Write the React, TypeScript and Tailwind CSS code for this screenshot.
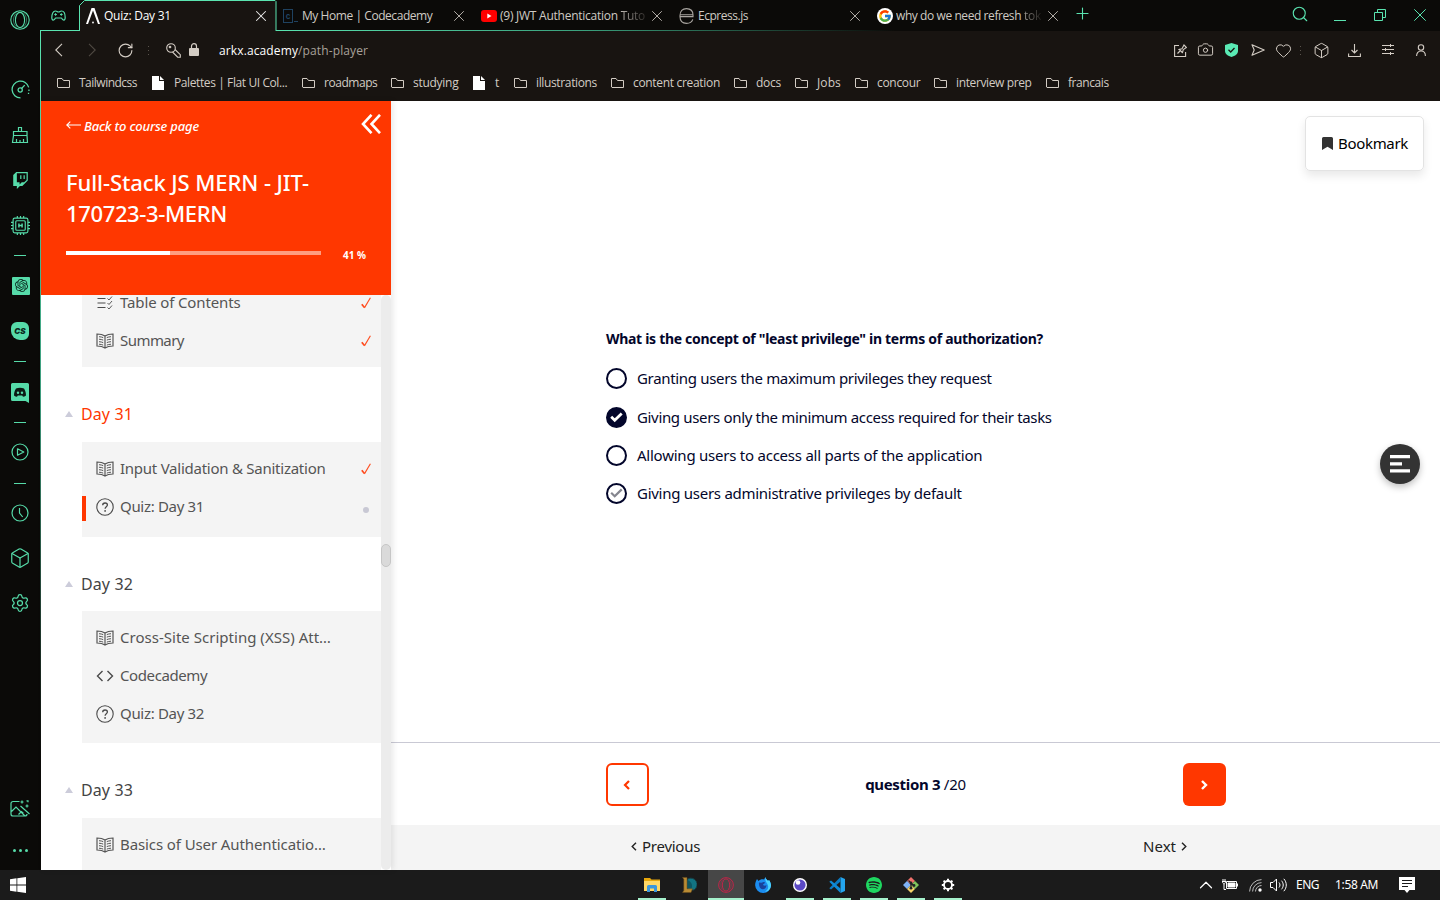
import type { ReactNode } from "react";
import { X, Plus, Search, ChevronUp, RotateCw, Camera, Heart, Box, Settings } from "lucide-react";
import { SiOpenai, SiTwitch, SiSpotify } from "react-icons/si";
import { FcGoogle } from "react-icons/fc";

type IconProps = { className?: string };

/* ---------- small drawings ---------- */

const OperaIcon = ({ className = "" }: IconProps) => (
  <svg viewBox="0 0 20 20" fill="none" stroke="currentColor" strokeWidth="1.1" className={className}>
    <circle cx="10" cy="10" r="9.2" />
    <ellipse cx="10" cy="10" rx="4.6" ry="7.6" />
    <path d="M13 2.500c2.500 2 3.500 4.500 3.500 7.500s-1 5.500-3.500 7.500" strokeWidth="0.5" />
    <path d="M7 2.500c-2.500 2-3.500 4.500-3.500 7.500s1 5.500 3.500 7.500" strokeWidth="0.5" />
  </svg>
);

const GamepadIcon = () => (
  <svg viewBox="0 0 15 11" fill="none" stroke="currentColor" strokeWidth="1.200" className="h-[11px] w-[15px]">
    <path d="M4.500 1C6 1 6 2 7.500 2S9 1 10.500 1C13 1 14.200 4 14.200 7.500c0 3.500-2.400 3.300-3.700.5H4.500C3.200 10.800.8 11 .8 7.500.8 4 2 1 4.500 1z" strokeLinejoin="round" />
    <path d="M4.600 3.200v2.600M3.300 4.500h2.600M9 4.500h2.600M10.300 3.200v2.600" strokeWidth="1" />
  </svg>
);

const GaugeIcon = () => (
  <svg viewBox="0 0 18 18" fill="none" stroke="currentColor" strokeWidth="1.2" className="size-[19px]">
    <path d="M9 17A8 8 0 1 1 16.800 7" />
    <path d="M17 9v1.500M16.600 12v1.300" />
    <circle cx="8.700" cy="9.500" r="2" />
    <path d="M10 8l3-3.200" />
  </svg>
);

const BroomIcon = () => (
  <svg viewBox="0 0 18 18" fill="none" stroke="currentColor" strokeWidth="1.2" className="size-[18px]">
    <path d="M7.500 5.500v-4h3v4M2.500 9.500v-4h13.500v4zM2.500 9.500l-1 7h15l-.5-7M5.500 16v-3M9 16v-2M12.500 16v-3" />
  </svg>
);

const ChipIcon = () => (
  <svg viewBox="0 0 18 18" fill="none" stroke="currentColor" strokeWidth="1.100" className="ml-px size-[19px]">
    <rect x="2" y="2" width="14" height="14" rx="1.500" />
    <rect x="4.500" y="4.500" width="9" height="9" rx="1" />
    <path d="M7.500 7v4M10.500 7v4M7.500 9h3" strokeWidth="1.400" />
    <path d="M6 0v2M9 0v2M12 0v2M6 16v2M9 16v2M12 16v2M0 6h2M0 9h2M0 12h2M16 6h2M16 9h2M16 12h2" />
  </svg>
);

const PlayIcon = () => (
  <svg viewBox="0 0 18 18" fill="none" stroke="currentColor" strokeWidth="1.200" className="size-[18px]">
    <circle cx="9" cy="9" r="8" />
    <path d="M6.500 5.800v6.400L12.800 9z" strokeLinejoin="round" />
  </svg>
);

const PictureIcon = () => (
  <svg viewBox="0 0 20 18" fill="none" stroke="currentColor" strokeWidth="1.200" className="h-[18px] w-5">
    <path d="M9.500 1.500H3a2 2 0 0 0-2 2v10.500a2 2 0 0 0 2 2h12a2 2 0 0 0 2-2M1.500 11.500l4.500-4.500 9 9M8.500 14.500l3-3 2 2" />
    <path d="M10.500 6l9 8M12 .5v3M10.500 2h3M17 4.500v3M15.500 6h3M16.500.8h1.500v1.500" />
  </svg>
);

const FolderIcon = () => (
  <svg viewBox="0 0 13 12" fill="none" stroke="#d3ccc4" className="h-3 w-[13px]">
    <path d="M.5 10V1.500h4.500l1.500 2h6V10.500H1z" strokeLinejoin="round" />
  </svg>
);

const FileIcon = () => (
  <svg viewBox="0 0 12 14" className="h-[14px] w-3">
    <path d="M0 0h7v5h5v9H0z" fill="#fff" />
    <path d="M8 0l4 4H8z" fill="#fff" />
  </svg>
);

const BookIcon = () => (
  <svg viewBox="0 0 18 16" fill="none" stroke="#555" className="h-4 w-[18px]">
    <path d="M9 3C7 1.600 4.500 1 1 1v12c3.500 0 6 .6 8 2 2-1.400 4.500-2 8-2V1c-3.500 0-6 .6-8 2zM9 3v12" strokeWidth="1.200" />
    <path d="M3 3.700c1.700.1 3 .4 4.200.9M3 6.200c1.700.1 3 .4 4.200.9M3 8.700c1.700.1 3 .4 4.200.9M3 11.200c1.700.1 3 .4 4.200.9M15 3.700c-1.700.1-3 .4-4.200.9M15 6.200c-1.700.1-3 .4-4.200.9M15 8.700c-1.700.1-3 .4-4.200.9M15 11.200c-1.700.1-3 .4-4.200.9" />
  </svg>
);

const QuizIcon = () => (
  <svg viewBox="0 0 18 18" fill="none" stroke="#4a4a4a" className="size-[18px]">
    <circle cx="9" cy="9" r="8.200" strokeWidth="1.100" />
    <path d="M6.700 7.200c0-3 4.700-2.800 4.700-.2 0 1.700-2.300 1.700-2.300 3.700" strokeWidth="1.300" />
    <circle cx="9.100" cy="12.900" r=".9" fill="#4a4a4a" stroke="none" />
  </svg>
);

const CodeIcon = () => (
  <svg viewBox="0 0 18 14" fill="none" stroke="#4a4a4a" strokeWidth="1.400" className="h-[14px] w-[18px]">
    <path d="M6.500 2L1.500 7l5 5M11.500 2l5 5-5 5" />
  </svg>
);

const ContentsIcon = () => (
  <svg viewBox="0 0 18 16" fill="none" stroke="#4a4a4a" strokeWidth="1.100" className="h-4 w-[18px]">
    <path d="M1.500 3.500h8M1.500 8h8M1.500 12.500h8" />
    <path d="M11.500 3.500l1.500 1.500 3-3.500M11.500 8l1.500 1.500 3-3.500M11.500 12.500l1.500 1.500 3-3.500" strokeWidth=".9" />
  </svg>
);

const TickIcon = () => (
  <svg viewBox="0 0 10 12" fill="none" stroke="#ff4a1c" className="h-3 w-[10px]">
    <path d="M.8 7.200L3.400 10.500" strokeWidth="1.700" />
    <path d="M3.400 10.900L9.400.8" strokeWidth="1.100" />
  </svg>
);

/* ---------- browser chrome ---------- */

const Cell = ({ h, children }: { h: string; children: ReactNode }) => (
  <div className={`flex shrink-0 items-center justify-center ${h}`}>{children}</div>
);

const Dash = () => <span className="h-px w-3 bg-current" />;

function OperaSidebar() {
  return (
    <aside className="flex w-10 shrink-0 flex-col bg-[#0b0a08] text-[#56dba9]">
      <Cell h="h-10"><OperaIcon className="size-5" /></Cell>
      <div className="h-[27px]" />
      <Cell h="h-[45px]"><GaugeIcon /></Cell>
      <Cell h="h-[46px]"><BroomIcon /></Cell>
      <Cell h="h-[45px]"><SiTwitch className="size-[17px]" /></Cell>
      <Cell h="h-[45px]"><ChipIcon /></Cell>
      <Cell h="h-[14px]"><Dash /></Cell>
      <Cell h="h-[47px]">
        <span className="ml-[2px] flex size-[18px] items-center justify-center rounded-[1px] bg-current">
          <SiOpenai className="size-[13px] text-[#0b2a20]" />
        </span>
      </Cell>
      <Cell h="h-[44px]">
        <span className="flex size-[18px] items-center justify-center rounded-md rounded-bl-[9px] bg-current">
          <span className="font-['Inter',sans-serif] text-[8px] leading-none font-black text-[#0b2a20] italic">CS</span>
        </span>
      </Cell>
      <Cell h="h-[16px]"><Dash /></Cell>
      <Cell h="h-[47px]">
        <svg viewBox="0 0 18 20" className="h-5 w-[18px]">
          <path d="M1.500 0h15A1.500 1.500 0 0 1 18 1.500V20l-3.500-2h-13A1.500 1.500 0 0 1 0 16.500v-15A1.500 1.500 0 0 1 1.500 0z" fill="#56dba9" />
          <path d="M5 5.500c2.500-1 5.500-1 8 0 1.500 2.500 2 4.500 2 7-1 .8-2 1.200-3 1.300l-.8-1.300h-4.400L6 13.800c-1-.1-2-.5-3-1.300 0-2.500.5-4.500 2-7z" fill="#0b1a14" />
          <circle cx="7" cy="9.800" r="1.200" fill="#56dba9" />
          <circle cx="11" cy="9.800" r="1.200" fill="#56dba9" />
        </svg>
      </Cell>
      <Cell h="h-[12px]"><Dash /></Cell>
      <Cell h="h-[48px]"><PlayIcon /></Cell>
      <Cell h="h-[14px]"><Dash /></Cell>
      <Cell h="h-[46px]">
        <svg viewBox="0 0 18 18" fill="none" stroke="currentColor" strokeWidth="1.200" className="size-[18px]">
          <circle cx="9" cy="9" r="8" />
          <path d="M8.500 4v5l3.200 4" />
        </svg>
      </Cell>
      <Cell h="h-[44px]"><Box className="size-[22px]" strokeWidth={1.300} /></Cell>
      <Cell h="h-[46px]"><Settings className="size-[20px]" strokeWidth={1.500} /></Cell>
      <div className="grow" />
      <Cell h="h-[43px]"><PictureIcon /></Cell>
      <Cell h="h-[40px]">
        <span className="flex gap-[3px]">
          <i className="size-[3px] rounded-full bg-current" />
          <i className="size-[3px] rounded-full bg-current" />
          <i className="size-[3px] rounded-full bg-current" />
        </span>
      </Cell>
    </aside>
  );
}

function Tab({ icon, title, tail, iconGap }: { icon: ReactNode; title: ReactNode; tail?: ReactNode; iconGap: string }) {
  return (
    <div className="flex w-[198px] items-center pr-[7px] pl-[6px]">
      <span className={`flex shrink-0 ${iconGap}`}>{icon}</span>
      <span className="mr-[3px] grow overflow-hidden whitespace-nowrap">{title}{tail}</span>
      <X className="size-[18px] shrink-0 text-[#b5b0aa]" strokeWidth={1.300} />
    </div>
  );
}

function TabStrip() {
  return (
    <div className="relative flex h-[31px] shrink-0 bg-[#0b0a08] text-[12px] text-[#cfcac4]">
      <div className="absolute bottom-0 left-0 h-px w-[39px] bg-[#5ae4b0]" />
      <div className="absolute bottom-0 left-[235px] h-px w-[620px] bg-linear-to-r from-[#5ae4b0] via-[#3a9f7c] to-transparent" />
      <div className="flex w-[38px] items-center pl-[10px] text-[#56dba9]">
        <GamepadIcon />
      </div>
      <div className="relative flex w-[198px] items-center pr-[7px] pl-[7px] text-white">
        <svg viewBox="0 0 198 31" className="absolute inset-0 h-[31px] w-[198px]">
          <path d="M.5 31V5.500l5-5h190.500l1 1V31" fill="#181411" stroke="#5ae4b0" />
        </svg>
        <svg viewBox="0 0 14 16" className="relative h-4 w-[14px] shrink-0">
          <path d="M0 16L5.500 0h3L14 16h-2L7 2.500 2 16z" fill="#fff" />
          <circle cx="7" cy="14.500" r=".9" fill="#fff" />
        </svg>
        <span className="relative ml-1 grow tracking-[-0.24px]">Quiz: Day 31</span>
        <X className="relative size-[18px] text-[#eee]" strokeWidth={1.400} />
      </div>
      <Tab
        iconGap="mr-1"
        icon={
          <span className="flex items-end gap-px text-[#1f4260]">
            <span className="flex h-[14px] w-[10px] items-center justify-center border border-current font-['Inter',sans-serif] text-[8px] font-bold">c</span>
            <i className="mb-px h-px w-1 bg-current" />
          </span>
        }
        title={<span className="tracking-[-0.44px]">My Home | Codecademy</span>}
      />
      <Tab
        iconGap="mr-[3px]"
        icon={
          <svg viewBox="0 0 16 12" className="h-3 w-4">
            <rect width="16" height="12" rx="3" fill="#f00" />
            <path d="M6.300 3.500v5L10.500 6z" fill="#fff" />
          </svg>
        }
        title={<span className="tracking-[-0.25px]">(9) JWT Authentication</span>}
        tail={<span className="bg-linear-to-r from-[#cfcac4] to-[#33302d] bg-clip-text tracking-[-0.3px] text-transparent"> Tuto</span>}
      />
      <Tab
        iconGap="mr-1"
        icon={
          <svg viewBox="0 0 15 16" fill="none" stroke="#a9a5a0" strokeWidth="1.100" className="h-4 w-[15px]">
            <path d="M1 8.600V7.500C1 3 3.500.6 7.500.6S14 3 14 7v1.600zM1 6.800h13M1 8.600c0 4.500 2.500 6.800 6.500 6.800 3.500 0 5.500-1.500 6.300-4" />
          </svg>
        }
        title={<span className="tracking-[-0.47px]">Ecpress.js</span>}
      />
      <Tab
        iconGap="mr-[3px]"
        icon={
          <span className="flex size-4 items-center justify-center rounded-full bg-white">
            <FcGoogle className="size-[14px]" />
          </span>
        }
        title={<span className="tracking-[-0.42px]">why do we need refresh</span>}
        tail={<span className="bg-linear-to-r from-[#b9b4ae] to-[#22201d] bg-clip-text tracking-[-0.2px] text-transparent"> tok</span>}
      />
      <div className="flex grow items-center text-[#5ae4b0]">
        <Plus className="mb-1 ml-1 size-[19px]" strokeWidth={1.400} />
        <div className="grow" />
        <Search className="mr-[25px] mb-[3px] size-[18px]" strokeWidth={1.500} />
        <span className="mt-[9px] mr-[28px] h-px w-3 bg-current" />
        <svg viewBox="0 0 12 12" fill="none" stroke="currentColor" className="mr-[28px] mb-px size-3">
          <path d="M.5 3.500h8v8h-8zM3.500 3.500v-3h8v8h-3" />
        </svg>
        <svg viewBox="0 0 12 12" fill="none" stroke="currentColor" className="mr-[14px] mb-px size-3">
          <path d="M.3.3l11.400 11.400M11.700.3L.3 11.700" />
        </svg>
      </div>
    </div>
  );
}

const Dots = () => (
  <svg viewBox="0 0 1 10" className="h-[10px] w-px">
    <path d="M0 0h1v1H0zM0 4h1v1H0zM0 8h1v1H0z" fill="#5a544d" />
  </svg>
);

function AddressBar() {
  return (
    <div className="flex h-[39px] shrink-0 items-center text-[#d3ccc4]">
      <svg viewBox="0 0 8 14" fill="none" stroke="currentColor" strokeWidth="1.100" className="mb-px ml-[14px] h-[14px] w-2">
        <path d="M7 .8L.8 7 7 13.200" />
      </svg>
      <svg viewBox="0 0 8 14" fill="none" stroke="#4f4943" strokeWidth="1.100" className="mb-px ml-[25px] h-[14px] w-2">
        <path d="M1 .8L7.200 7 1 13.200" />
      </svg>
      <RotateCw className="ml-[21px] size-[17px]" strokeWidth={1.600} />
      <span className="ml-[14px] flex"><Dots /></span>
      <svg viewBox="0 0 15 15" fill="none" stroke="currentColor" strokeWidth="1.100" className="mb-px ml-[17px] size-[15px]">
        <circle cx="5" cy="5" r="4.300" />
        <circle cx="4" cy="4" r=".8" />
        <path d="M9 6.500l5.300 5.200v2.500h-2.600L6.500 9" />
      </svg>
      <svg viewBox="0 0 10 13" className="mb-[2px] ml-[8px] h-[13px] w-[10px]">
        <rect y="5" width="10" height="8" rx="1" fill="#d3ccc4" />
        <path d="M2.500 5.500V3.200a2.500 2.500 0 0 1 5 0v2.300" fill="none" stroke="#d3ccc4" strokeWidth="1.200" />
      </svg>
      <span className="ml-[20px] text-[12px] tracking-[0.12px] text-[#a8a19a]">
        <span className="text-white">arkx.academy</span>/path-player
      </span>
      <div className="grow" />
      <svg viewBox="0 0 13 13" fill="none" stroke="currentColor" strokeWidth="1.100" className="mb-px size-[13px]">
        <path d="M5 1.500H.6v11h11V8M3.500 9.500l3-3M5 5l3 3.500M5 5.500l3-.8L10 1l2.500 2.500-3.200 2-.8 3z" />
      </svg>
      <Camera className="mb-[2px] ml-[10px] size-[17px]" strokeWidth={1.400} />
      <svg viewBox="0 0 13 14" className="mb-[2px] ml-[11px] h-[14px] w-[13px]">
        <path d="M6.500 0L13 2v6c0 3-3 5-6.500 6C3 13 0 11 0 8V2z" fill="#5aeab4" />
        <path d="M3.500 6.800l2.200 2.200 3.800-4" fill="none" stroke="#181411" strokeWidth="1.300" />
      </svg>
      <svg viewBox="0 0 14 12" fill="none" stroke="currentColor" strokeWidth="1.100" className="mb-px ml-[13px] h-3 w-[14px]">
        <path d="M1 .8L13.200 6 1 11.200 3.200 6z" strokeLinejoin="round" />
      </svg>
      <Heart className="mb-px ml-[10px] size-[17px]" strokeWidth={1.400} />
      <span className="ml-[8px] flex"><Dots /></span>
      <Box className="mb-px ml-[12px] size-[17px]" strokeWidth={1.400} />
      <svg viewBox="0 0 13 13" fill="none" stroke="currentColor" strokeWidth="1.100" className="mb-px ml-[18px] size-[13px]">
        <path d="M6.500 0v9M3.500 6l3 3 3-3M.6 9.500v3h11.800v-3" />
      </svg>
      <svg viewBox="0 0 12 11" fill="none" stroke="currentColor" className="mb-[2px] ml-[21px] h-[11px] w-3">
        <path d="M0 1.500h12M0 5.500h12M0 9.500h12M8.500 0v3M3.500 4v3M8.500 8v3" />
      </svg>
      <svg viewBox="0 0 10 12" fill="none" stroke="currentColor" strokeWidth="1.100" className="mb-[2px] mr-[14px] ml-[22px] h-3 w-[10px]">
        <circle cx="5" cy="3.500" r="2.700" />
        <path d="M.6 12c0-3 1.700-5 4.400-5s4.400 2 4.400 5" />
      </svg>
    </div>
  );
}

const bookmarks = [
  { label: "Tailwindcss", box: "w-[95px]", tracking: "tracking-[-0.5px]" },
  { label: "Palettes | Flat UI Col...", file: true, box: "w-[150px]", tracking: "tracking-[-0.4px]" },
  { label: "roadmaps", box: "w-[89px]", tracking: "tracking-[-0.45px]" },
  { label: "studying", box: "w-[82px]", tracking: "tracking-[-0.28px]" },
  { label: "t", file: true, box: "w-[41px]", tracking: "tracking-normal" },
  { label: "illustrations", box: "w-[97px]", tracking: "tracking-[-0.36px]" },
  { label: "content creation", box: "w-[123px]", tracking: "tracking-[-0.32px]" },
  { label: "docs", box: "w-[61px]", tracking: "tracking-[-0.26px]" },
  { label: "Jobs", box: "w-[60px]", tracking: "tracking-[0.1px]" },
  { label: "concour", box: "w-[79px]", tracking: "tracking-[-0.3px]" },
  { label: "interview prep", box: "w-[112px]", tracking: "tracking-[-0.38px]" },
  { label: "francais", box: "w-[80px]", tracking: "tracking-[-0.43px]" },
];

function BookmarkBar() {
  return (
    <div className="flex h-[31px] shrink-0 items-center pb-[5px] pl-4 text-[12px] text-[#d3ccc4]">
      {bookmarks.map((b) => (
        <div key={b.label} className={`flex shrink-0 items-center whitespace-nowrap ${b.box}`}>
          {b.file ? <FileIcon /> : <FolderIcon />}
          <span className={`${b.file ? "ml-[10px]" : "ml-[9px]"} ${b.tracking}`}>{b.label}</span>
        </div>
      ))}
    </div>
  );
}

/* ---------- course page ---------- */

type Item = { icon: ReactNode; label: string; tracking: string; done?: boolean; active?: boolean };

const firstItems: Item[] = [
  { icon: <ContentsIcon />, label: "Table of Contents", tracking: "tracking-[-0.13px]", done: true },
  { icon: <BookIcon />, label: "Summary", tracking: "tracking-[-0.55px]", done: true },
];
const day31: Item[] = [
  { icon: <BookIcon />, label: "Input Validation & Sanitization", tracking: "tracking-[-0.25px]", done: true },
  { icon: <QuizIcon />, label: "Quiz: Day 31", tracking: "tracking-[-0.32px]", active: true },
];
const day32: Item[] = [
  { icon: <BookIcon />, label: "Cross-Site Scripting (XSS) Att…", tracking: "tracking-[0.02px]" },
  { icon: <CodeIcon />, label: "Codecademy", tracking: "tracking-[-0.4px]" },
  { icon: <QuizIcon />, label: "Quiz: Day 32", tracking: "tracking-[-0.32px]" },
];
const day33: Item[] = [
  { icon: <BookIcon />, label: "Basics of User Authenticatio…", tracking: "tracking-[-0.1px]" },
];

function ItemList({ items, pad }: { items: Item[]; pad: string }) {
  return (
    <ul className={`ml-[41px] w-[299px] shrink-0 bg-[#f4f4f4] ${pad}`}>
      {items.map((it) => (
        <li key={it.label} className="flex h-[38px] items-center pr-[10px]">
          <span className={`h-[25px] w-1 ${it.active ? "mt-[3px] bg-[#ff3700]" : ""}`} />
          <span className="ml-[10px] flex w-[18px] justify-center">{it.icon}</span>
          <span className={`ml-[6px] grow pb-[2px] text-[15px] whitespace-nowrap text-[#555] ${it.tracking}`}>{it.label}</span>
          {it.done && <TickIcon />}
          {it.active && <span className="mt-[6px] mr-[2px] size-[6px] rounded-full bg-[#c8c8d4]" />}
        </li>
      ))}
    </ul>
  );
}

function DayLabel({ text, h, color }: { text: string; h: string; color: string }) {
  return (
    <div className={`flex shrink-0 items-center pt-[19px] pl-6 ${h}`}>
      <svg viewBox="0 0 8 6" className="h-[6px] w-2"><path d="M4 0l4 6H0z" fill="#ccccda" /></svg>
      <span className={`ml-2 text-[16px] tracking-[0.1px] ${color}`}>{text}</span>
    </div>
  );
}

function CourseSidebar() {
  return (
    <section className="relative z-10 flex w-[350px] shrink-0 flex-col bg-white shadow-[2px_0_6px_rgba(0,0,0,0.09)]">
      <header className="flex h-[194px] shrink-0 flex-col bg-[#ff3700] pl-[25px] text-white">
        <div className="flex h-[47px] items-center pt-[2px]">
          <svg viewBox="0 0 15 8" fill="none" stroke="#fff" strokeWidth="1.100" className="mb-px h-2 w-[15px]">
            <path d="M15 4H.8M4.300.6L.8 4l3.500 3.400" />
          </svg>
          <span className="ml-[3px] grow pt-[2px] text-[13px] font-medium tracking-[-0.18px] italic">Back to course page</span>
          <svg viewBox="0 0 20 20" fill="none" stroke="#fff" strokeWidth="2.600" className="mr-[10px] mb-[4px] size-5">
            <path d="M10.500 .8L2 10l8.500 9.200M19 .8L10.500 10l8.500 9.200" />
          </svg>
        </div>
        <h1 className="mt-[19px] text-[22px] leading-[31px] font-medium">
          <span className="block tracking-[-0.09px]">Full-Stack JS MERN - JIT-</span>
          <span className="block tracking-[-0.36px]">170723-3-MERN</span>
        </h1>
        <div className="mt-[15px] flex items-center">
          <div className="h-1 w-[255px] bg-[#ff9d80]">
            <div className="h-1 w-[104px] bg-white" />
          </div>
          <span className="ml-[22px] pt-[4px] text-[10px] leading-[14px] font-bold tracking-[-0.02px]">41 %</span>
        </div>
      </header>
      <div className="flex h-[575px] overflow-hidden">
        <div className="flex h-[575px] w-[340px] flex-col overflow-hidden">
          <div className="-mt-[11px] flex flex-col">
            <ItemList items={firstItems} pad="pb-[7px]" />
            <DayLabel text="Day 31" h="h-[75px]" color="text-[#ff3700]" />
            <ItemList items={day31} pad="pt-[8px] pb-[11px]" />
            <DayLabel text="Day 32" h="h-[74px]" color="text-[#444]" />
            <ItemList items={day32} pad="pt-[8px] pb-[10px]" />
            <DayLabel text="Day 33" h="h-[75px]" color="text-[#444]" />
            <ItemList items={day33} pad="pt-[8px] pb-[10px]" />
          </div>
        </div>
        <div className="w-[10px] rounded-[5px] bg-[#ececec] pt-[249px]">
          <div className="h-[23px] rounded-[5px] border border-[#c6c6c6] bg-[#dadada]" />
        </div>
      </div>
    </section>
  );
}

const options = [
  { text: "Granting users the maximum privileges they request", tracking: "tracking-[-0.33px]", state: "off", h: "h-[39px]" },
  { text: "Giving users only the minimum access required for their tasks", tracking: "tracking-[-0.338px]", state: "on", h: "h-[38px]" },
  { text: "Allowing users to access all parts of the application", tracking: "tracking-[-0.235px]", state: "off", h: "h-[38px]" },
  { text: "Giving users administrative privileges by default", tracking: "tracking-[-0.268px]", state: "hover", h: "h-[38px]" },
];

function Radio({ state }: { state: string }) {
  return (
    <svg viewBox="0 0 21 21" className="size-[21px] shrink-0">
      <circle cx="10.500" cy="10.500" r="9.500" fill={state === "on" ? "#03062b" : "#fff"} stroke="#03062b" strokeWidth="2" />
      {state !== "off" && (
        <path d="M5.200 9.800l3.500 3.400 7-6.800" fill="none" stroke={state === "on" ? "#fff" : "#85868f"} strokeWidth={state === "on" ? 2.800 : 2.200} />
      )}
    </svg>
  );
}

function Quiz() {
  return (
    <main className="flex grow flex-col bg-white text-[15px] text-[#03062b]">
      <div className="flex h-[642px] shrink-0 flex-col border-b border-[#c9c9d4]">
        <div className="flex justify-end pt-[15px] pr-4">
          <button className="flex h-[55px] w-[119px] items-center rounded-[5px] border border-[#e3e3e3] pl-4 text-black shadow-[0_5px_10px_rgba(0,0,0,0.09)]">
            <svg viewBox="0 0 11 13" className="h-[13px] w-[11px]">
              <path d="M1.500 0h8A1.500 1.500 0 0 1 11 1.500V13L5.500 9.800 0 13V1.500A1.500 1.500 0 0 1 1.500 0z" fill="#333" />
            </svg>
            <span className="ml-[5px] tracking-[-0.32px]">Bookmark</span>
          </button>
        </div>
        <div className="mt-[158px] ml-[215px]">
          <h2 className="h-[39px] text-[14px] leading-5 font-bold tracking-[-0.305px] whitespace-nowrap">
            What is the concept of "least privilege" in terms of authorization?
          </h2>
          {options.map((o) => (
            <label key={o.text} className={`flex items-start gap-[10px] ${o.h}`}>
              <Radio state={o.state} />
              <span className={`leading-[21px] whitespace-nowrap ${o.tracking}`}>{o.text}</span>
            </label>
          ))}
        </div>
      </div>
      <div className="flex h-[82px] shrink-0 items-start pt-[20px] pl-[215px]">
        <div className="flex w-[620px] items-center justify-between">
          <button className="flex size-[43px] items-center justify-center rounded-md border-2 border-[#ff3700]">
            <svg viewBox="0 0 8 10" fill="none" stroke="#ff3700" strokeWidth="2.200" className="mr-px h-[10px] w-2">
              <path d="M6 1L2 5l4 4" />
            </svg>
          </button>
          <span className="pr-px whitespace-nowrap">
            <b className="tracking-[-0.33px]">question 3</b>
            <span className="tracking-[-0.25px]"> /20</span>
          </span>
          <button className="flex size-[43px] items-center justify-center rounded-md bg-[#ff3700]">
            <svg viewBox="0 0 8 10" fill="none" stroke="#fff" strokeWidth="2.400" className="h-[10px] w-2">
              <path d="M2 1l4 4-4 4" />
            </svg>
          </button>
        </div>
      </div>
      <div className="flex h-[45px] shrink-0 items-center justify-between bg-[#f4f4f4] pr-[253px] pb-[2px] pl-[240px] text-[#222]">
        <span className="flex items-center">
          <svg viewBox="0 0 6 9" fill="none" stroke="#222" strokeWidth="1.400" className="mr-[5px] h-[9px] w-[6px]"><path d="M5 .7L1.200 4.500 5 8.300" /></svg>
          <span className="tracking-[-0.25px]">Previous</span>
        </span>
        <span className="flex items-center">
          Next
          <svg viewBox="0 0 6 9" fill="none" stroke="#222" strokeWidth="1.400" className="ml-[5px] h-[9px] w-[6px]"><path d="M1 .7l3.800 3.800L1 8.300" /></svg>
        </span>
      </div>
    </main>
  );
}

/* ---------- taskbar ---------- */

const VsCode = () => (
  <svg viewBox="0 0 16 16" className="size-4">
    <path d="M11.500 0L16 2v12l-4.500 2z" fill="#24a5ee" />
    <path d="M11.500 0v4.500L2 12.500.3 11.200z" fill="#0b7cc4" />
    <path d="M11.500 16v-4.500L2 3.500.3 4.800z" fill="#0f8bd8" />
  </svg>
);

const Explorer = () => (
  <svg viewBox="0 0 16 14" className="h-[14px] w-4">
    <path d="M0 0h6l1.500 1.500H16V13H0z" fill="#e8a80c" />
    <path d="M0 3h16v10H0z" fill="#ffd866" />
    <path d="M3 14V8.500A1.500 1.500 0 0 1 4.500 7h7A1.500 1.500 0 0 1 13 8.500V14h-3v-3.500H6V14z" fill="#3b97dc" />
  </svg>
);

const League = () => (
  <svg viewBox="0 0 16 16" className="size-4">
    <path d="M6.500 2a6.300 6.300 0 0 1 6.500 11H7z" fill="#127482" stroke="#173c42" />
    <path d="M6 3v8.500h4.500C12 8 10 4 6 3z" fill="#0e5561" />
    <path d="M1.500.5H6v11.300h5.500L10 15.500H1.500l1.300-2V2.200z" fill="#b98b34" stroke="#6b4d1a" strokeWidth=".5" />
  </svg>
);

const Insomnia = () => (
  <svg viewBox="0 0 16 16" className="size-4">
    <circle cx="8" cy="8" r="7" fill="#fff" />
    <circle cx="8" cy="8" r="5.600" fill="#5b49c6" />
    <circle cx="6" cy="5.500" r="2.300" fill="#fff" />
  </svg>
);

const Firefox = () => (
  <svg viewBox="0 0 16 16" className="size-4">
    <path d="M2 2l1.500 2C5 2.500 7 2 9 2.500L10.500 0c0 2 1.500 2.500 2.500 4l1-1c1.500 2 2 4 2 5.500A7.800 7.800 0 0 1 8 16 7.800 7.800 0 0 1 .2 8.500C0 6 1 4 2 2z" fill="#1b8df0" />
    <path d="M10.500 0c0 2 1.500 2.500 2.500 4l1-1c1.500 2 2 4 2 5.500-.5 4-3 6-6 6 3-1.500 3.800-4 2.800-6.500C12 5.500 9.500 4 10.500 0z" fill="#4cd4ff" />
    <path d="M4 5.500l2.500.3L8.500 5c1 0 1.500.5 1.500 1l-2 1.500c.5 1.500 2.500 1.500 3.500.5 0 3-2 4.500-4 4.300C5 12 3.500 9 4 5.500z" fill="#19429c" />
  </svg>
);

const GitBash = () => (
  <svg viewBox="0 0 16 16" className="size-4">
    <path d="M8 0l4 4-4 4-4-4z" fill="#f0716c" />
    <path d="M4 4l4 4-4 4-4-4z" fill="#7fb2f5" />
    <path d="M12 4l4 4-4 4-4-4z" fill="#80c45c" />
    <path d="M8 8l4 4-4 4-4-4z" fill="#f7d36a" />
    <path d="M5.500 3.500l5 5M8 6v5" stroke="#222" strokeWidth="1.300" />
    <circle cx="8" cy="11.200" r="1.400" fill="#222" />
    <circle cx="11" cy="8.500" r="1.400" fill="#222" />
    <circle cx="8" cy="6" r="1.400" fill="#222" />
  </svg>
);

const Gear = () => (
  <svg viewBox="0 0 16 16" fill="none" stroke="#fff" className="size-4">
    <circle cx="8" cy="8" r="4" strokeWidth="1.800" />
    <path d="M8 4V1.800M8 14.200V12M4 8H1.800M14.200 8H12M5.200 5.200L3.600 3.600M12.400 12.400l-1.600-1.600M5.200 10.800l-1.600 1.600M12.400 3.600l-1.600 1.600" strokeWidth="2" />
  </svg>
);

const apps: { name: string; icon: ReactNode; line: string; bg: string }[] = [
  { name: "files", icon: <Explorer />, line: "w-7 bg-[#a6f2cd]", bg: "" },
  { name: "league", icon: <League />, line: "w-0", bg: "" },
  { name: "opera", icon: <OperaIcon className="size-4 text-[#cf2049]" />, line: "w-9 bg-[#a6f2cd]", bg: "bg-[#474747]" },
  { name: "firefox", icon: <Firefox />, line: "w-0", bg: "" },
  { name: "insomnia", icon: <Insomnia />, line: "w-7 bg-[#a6f2cd]", bg: "" },
  { name: "code", icon: <VsCode />, line: "w-7 bg-[#a6f2cd]", bg: "" },
  { name: "spotify", icon: <SiSpotify className="size-4 text-[#1ed760]" />, line: "w-7 bg-[#a6f2cd]", bg: "" },
  { name: "git", icon: <GitBash />, line: "w-7 bg-[#a6f2cd]", bg: "" },
  { name: "settings", icon: <Gear />, line: "w-7 bg-[#a6f2cd]", bg: "" },
];

function Taskbar() {
  return (
    <footer className="flex h-[30px] shrink-0 items-stretch bg-[#1b1b1b] pl-[10px] text-white">
      <div className="flex w-[624px] items-center">
        <svg viewBox="0 0 16 16" className="size-4">
          <path d="M0 2.300L6.500 1.300v6.200H0zM7.300 1.200L16 0v7.500H7.300zM0 8.400h6.500v6.300L0 13.800zM7.300 8.400H16V16l-8.700-1.200z" fill="#fff" />
        </svg>
      </div>
      <div className="flex gap-px">
        {apps.map((a) => (
          <div key={a.name} className={`flex w-9 flex-col items-center ${a.bg}`}>
            <div className="flex h-7 items-center pt-[2px]">{a.icon}</div>
            <div className={`h-[2px] ${a.line}`} />
          </div>
        ))}
      </div>
      <div className="flex grow items-center justify-end text-[12px]">
        <ChevronUp className="size-[22px]" strokeWidth={1.300} />
        <svg viewBox="0 0 16 12" fill="none" stroke="#fff" className="ml-[5px] h-3 w-4">
          <path d="M4.500 2.500h10v7h-10zM15.500 4.500v3M0 2.500h4M1 0v2M3 0v2M.5 2.500c0 3 3 3 3 0M2 5v5.500h2" />
          <path d="M6 4h7v4H6z" fill="#fff" />
        </svg>
        <svg viewBox="0 0 13 13" fill="none" stroke="#bbb" className="ml-[11px] h-[13px] w-[13px]">
          <path d="M.6 12.500A12 12 0 0 1 12.500.6M3.600 12.500a9 9 0 0 1 8.900-8.900M6.500 12.500a6 6 0 0 1 6-6" />
          <circle cx="11" cy="11" r="1.700" fill="#fff" stroke="none" />
        </svg>
        <svg viewBox="0 0 17 14" fill="none" stroke="#fff" className="ml-[8px] h-[14px] w-[17px]">
          <path d="M.5 4.500H3l3.500-3.500v12L3 9.500H.5z" />
          <path d="M9 4.500c1.300 1.500 1.300 3.500 0 5M11.500 2.700c2.300 2.600 2.300 6 0 8.600M13.800.8c3.300 3.700 3.300 8.700 0 12.400" />
        </svg>
        <span className="ml-[9px] w-[23px] tracking-[-0.48px]">ENG</span>
        <span className="ml-[16px] w-[43px] tracking-[-0.34px] whitespace-nowrap">1:58 AM</span>
        <svg viewBox="0 0 16 16" className="mr-[25px] ml-[21px] size-4">
          <path d="M0 0h16v13h-5.500L8 16l-2.500-3H0z" fill="#fff" />
          <path d="M3 3.500h10M3 6.500h10M3 9.500h6" stroke="#1b1b1b" />
        </svg>
      </div>
    </footer>
  );
}

export default function App() {
  return (
    <div className="relative flex h-[900px] w-[1440px] flex-col overflow-hidden bg-[#181411] font-['Noto_Sans',sans-serif]">
      <div className="flex h-[870px]">
        <OperaSidebar />
        <div className="flex w-px shrink-0 flex-col bg-[#0b0a08] pt-[30px]">
          <div className="h-[730px] bg-linear-to-b from-[#5ae4b0] via-[#3f9f80] to-[#0b0a08]" />
        </div>
        <div className="flex min-w-0 grow flex-col">
          <div className="flex h-[101px] shrink-0 flex-col font-['Open_Sans',sans-serif]">
            <TabStrip />
            <AddressBar />
            <BookmarkBar />
          </div>
          <div className="flex h-[769px]">
            <CourseSidebar />
            <Quiz />
          </div>
        </div>
      </div>
      <Taskbar />
      <button className="absolute top-[444px] left-[1380px] flex size-10 items-center justify-center rounded-full bg-[#333] shadow-[0_3px_7px_rgba(0,0,0,0.25)]">
        <svg viewBox="0 0 20 18" className="h-[18px] w-5">
          <path d="M0 0h20v3.300H0zM0 7.200h12v3.300H0zM0 14.300h20v3.300H0z" fill="#fff" />
        </svg>
      </button>
    </div>
  );
}
